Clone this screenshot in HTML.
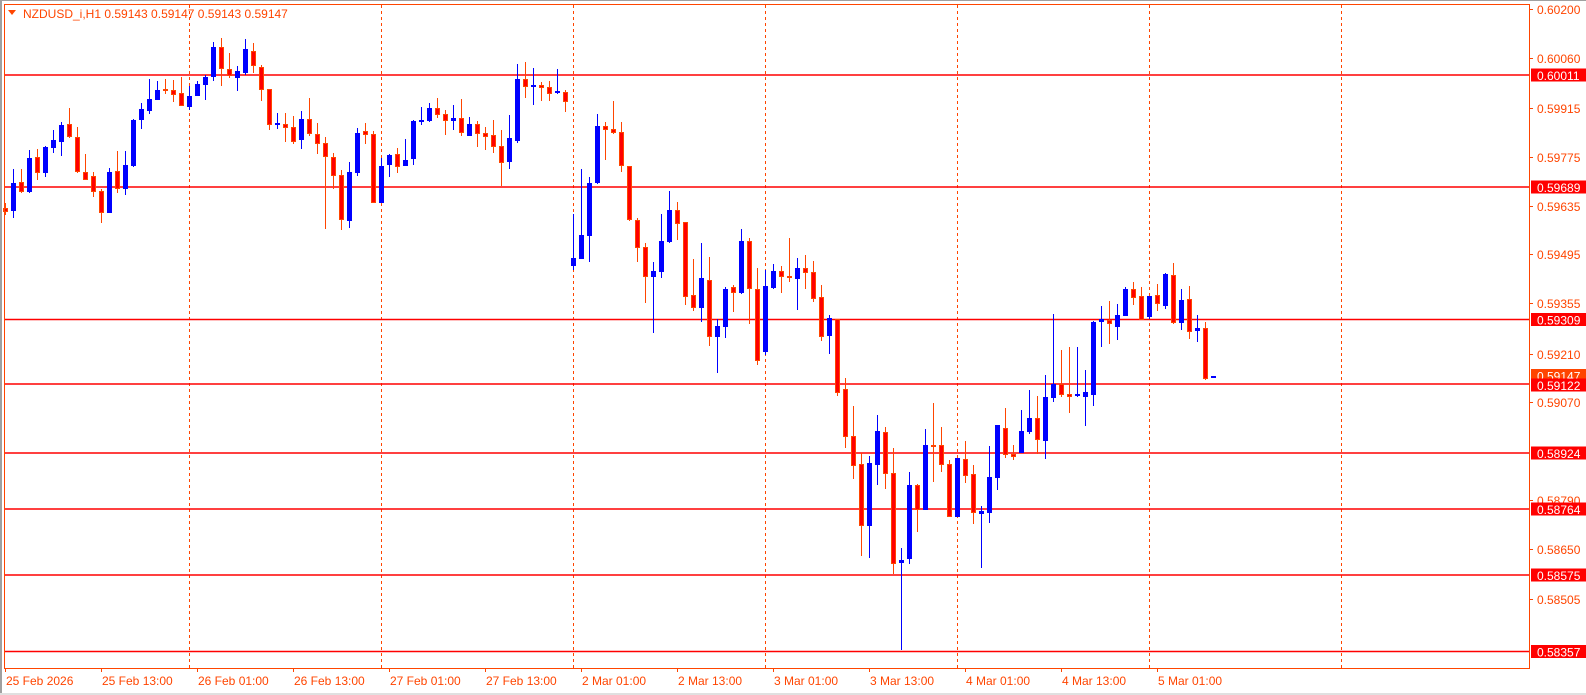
<!DOCTYPE html>
<html><head><meta charset="utf-8"><style>
html,body{margin:0;padding:0;background:#fff;width:1586px;height:695px;overflow:hidden}
svg{display:block}
text{font-family:"Liberation Sans",sans-serif;font-size:12px}
</style></head><body>
<svg id="s" width="1586" height="695" xmlns="http://www.w3.org/2000/svg">
<rect x="0" y="0" width="1586" height="695" fill="#fff"/>
<rect x="0" y="0" width="1586" height="1" fill="#a0a0a0"/>
<rect x="0" y="0" width="2" height="695" fill="#a0a0a0"/>
<rect x="0" y="693" width="1586" height="2" fill="#e0e0e0"/>
<g stroke="#ff4500" stroke-width="1" stroke-dasharray="3,3">
<line x1="189.5" y1="5" x2="189.5" y2="668"/>
<line x1="381.5" y1="5" x2="381.5" y2="668"/>
<line x1="573.5" y1="5" x2="573.5" y2="668"/>
<line x1="765.5" y1="5" x2="765.5" y2="668"/>
<line x1="957.5" y1="5" x2="957.5" y2="668"/>
<line x1="1149.5" y1="5" x2="1149.5" y2="668"/>
<line x1="1341.5" y1="5" x2="1341.5" y2="668"/>
</g>
<g stroke="#ff0000" stroke-width="1.5">
<line x1="4" y1="75" x2="1529" y2="75"/>
<line x1="4" y1="187" x2="1529" y2="187"/>
<line x1="4" y1="319.5" x2="1529" y2="319.5"/>
<line x1="4" y1="384" x2="1529" y2="384"/>
<line x1="4" y1="453" x2="1529" y2="453"/>
<line x1="4" y1="509" x2="1529" y2="509"/>
<line x1="4" y1="575" x2="1529" y2="575"/>
<line x1="4" y1="651.5" x2="1529" y2="651.5"/>
</g>
<g id="c"></g>
<rect x="4.5" y="4.5" width="1525" height="664" fill="none" stroke="#ff4500" stroke-width="1"/>
<polygon points="8,10 16,10 12,15" fill="#ff4500"/>
<text x="23" y="18" fill="#ff4500">NZDUSD_i,H1  0.59143 0.59147 0.59143 0.59147</text>
<g fill="#ff4500" id="ticks"></g>
<g fill="#ff4500">
<text x="1537" y="14">0.60200</text>
<text x="1537" y="63">0.60060</text>
<text x="1537" y="113">0.59915</text>
<text x="1537" y="162">0.59775</text>
<text x="1537" y="211">0.59635</text>
<text x="1537" y="259">0.59495</text>
<text x="1537" y="308">0.59355</text>
<text x="1537" y="359">0.59210</text>
<text x="1537" y="407">0.59070</text>
<text x="1537" y="505">0.58790</text>
<text x="1537" y="554">0.58650</text>
<text x="1537" y="604">0.58505</text>
</g>
<g>
<rect x="1531" y="68.5" width="55" height="13" fill="#ff0000"/><text x="1537" y="80" fill="#fff">0.60011</text>
<rect x="1531" y="180.5" width="55" height="13" fill="#ff0000"/><text x="1537" y="192" fill="#fff">0.59689</text>
<rect x="1531" y="313" width="55" height="13" fill="#ff0000"/><text x="1537" y="324.5" fill="#fff">0.59309</text>
<rect x="1531" y="369" width="55" height="13" fill="#ff4500"/><text x="1537" y="380.5" fill="#fff">0.59147</text>
<rect x="1531" y="378.5" width="55" height="13" fill="#ff0000"/><text x="1537" y="390" fill="#fff">0.59122</text>
<rect x="1531" y="446.5" width="55" height="13" fill="#ff0000"/><text x="1537" y="458" fill="#fff">0.58924</text>
<rect x="1531" y="502.5" width="55" height="13" fill="#ff0000"/><text x="1537" y="514" fill="#fff">0.58764</text>
<rect x="1531" y="568.5" width="55" height="13" fill="#ff0000"/><text x="1537" y="580" fill="#fff">0.58575</text>
<rect x="1531" y="645" width="55" height="13" fill="#ff0000"/><text x="1537" y="656.5" fill="#fff">0.58357</text>
</g>
<g fill="#ff4500">
<text x="6" y="685">25 Feb 2026</text>
<text x="102" y="685">25 Feb 13:00</text>
<text x="198" y="685">26 Feb 01:00</text>
<text x="294" y="685">26 Feb 13:00</text>
<text x="390" y="685">27 Feb 01:00</text>
<text x="486" y="685">27 Feb 13:00</text>
<text x="582" y="685">2 Mar 01:00</text>
<text x="678" y="685">2 Mar 13:00</text>
<text x="774" y="685">3 Mar 01:00</text>
<text x="870" y="685">3 Mar 13:00</text>
<text x="966" y="685">4 Mar 01:00</text>
<text x="1062" y="685">4 Mar 13:00</text>
<text x="1158" y="685">5 Mar 01:00</text>
</g>
</svg>
<script>
var D="r 203 208 212 215|b 169 183 211 218|r 169 182 192 193|b 150 158 192 193|r 149 157 173 180|b 146 147 173 177|b 130 140 148 153|b 122 125 142 156|r 108 124 137 138|r 127 137 172 173|r 154 172 180 180|r 172 176 192 197|r 189 191 213 223|b 168 172 213 213|r 151 171 189 193|b 151 165 189 195|b 119 120 166 167|b 103 109 120 129|b 79 99 111 114|b 81 90 100 100|r 79 89 91 94|r 80 90 95 102|r 77 93 106 106|b 86 96 107 110|b 81 84 96 96|b 75 77 85 100|b 42 47 77 81|r 38 47 69 86|r 53 69 76 78|b 66 71 78 91|b 39 49 73 75|r 43 51 66 73|r 65 67 90 101|r 89 89 125 130|b 113 123 125 129|r 113 124 128 142|r 116 127 142 144|b 111 119 140 149|r 98 119 134 136|r 123 134 144 154|r 137 143 157 229|r 153 157 176 189|r 170 175 220 230|b 162 172 221 228|b 128 133 173 176|r 123 131 135 144|r 131 134 203 203|b 158 166 203 203|b 154 155 165 177|r 148 154 167 173|b 139 160 166 166|b 120 121 159 165|b 107 120 121 125|b 103 108 121 122|r 98 108 115 118|r 110 114 121 135|b 105 118 121 130|r 99 118 133 136|b 117 124 136 136|r 121 124 134 147|r 127 133 137 150|r 120 135 147 153|r 130 146 163 186|b 115 138 162 169|b 64 79 141 143|r 62 79 87 98|b 68 85 87 105|r 82 85 88 101|r 81 87 94 101|b 69 91 93 94|r 90 92 102 112|b 214 258 266 270|b 169 235 259 259|b 177 183 236 262|b 114 126 183 184|r 122 126 130 160|r 101 129 133 134|r 122 132 166 172|r 166 166 220 221|r 218 220 248 262|r 243 247 277 303|b 262 271 277 333|b 214 241 272 278|b 191 210 242 243|r 202 210 224 240|r 222 222 297 305|r 259 295 308 311|b 243 278 308 322|r 257 280 337 346|b 319 326 337 373|b 287 289 327 338|r 285 287 293 312|b 229 241 293 294|r 238 241 289 324|r 268 289 361 365|b 270 286 352 355|b 264 271 288 289|r 266 271 277 293|r 238 276 278 282|b 258 268 279 310|r 255 268 273 289|r 261 272 299 302|r 285 297 337 341|b 315 318 336 354|r 319 319 393 396|r 378 389 437 448|r 406 436 466 479|r 453 464 526 556|b 456 463 526 558|b 415 431 465 485|r 427 432 474 489|r 448 473 564 574|b 548 560 563 650|b 472 485 559 564|r 484 485 510 532|b 429 445 510 510|r 403 445 447 482|r 427 445 465 472|r 460 464 517 517|b 458 458 517 517|r 441 459 476 483|r 465 474 513 524|b 506 511 514 568|b 446 477 513 523|b 425 425 478 490|r 408 428 455 458|r 445 454 457 460|b 410 431 453 453|b 390 418 432 434|r 396 418 440 454|b 375 397 441 459|b 314 384 398 402|r 350 384 395 397|r 347 394 397 413|b 347 394 396 397|b 370 392 397 426|b 321 322 395 406|b 306 319 322 347|r 301 320 324 344|b 304 315 327 340|b 287 289 316 316|r 282 289 298 305|r 287 296 320 320|b 296 296 317 319|r 284 295 304 311|b 273 274 306 309|r 263 275 323 324|b 289 300 323 330|r 286 299 332 339|b 315 328 331 342|r 322 328 379 380|b 376 376 378 378";
var g=document.getElementById('c'),ns="http://www.w3.org/2000/svg",h="";
D.split('|').forEach(function(s,i){var a=s.split(' '),t=a[0],H=+a[1],T=+a[2],B=+a[3],L=+a[4];
var x=Math.round(5.3+8*i);if(B-T<2)B=T+2;
var wc=t=='b'?'#0000ff':'#ff4500';
h+='<rect x="'+x+'" y="'+H+'" width="1" height="'+(L-H)+'" fill="'+wc+'"/>';
if(t=='b')h+='<rect x="'+(x-2)+'" y="'+T+'" width="5" height="'+(B-T)+'" fill="#0000ff"/>';
else h+='<rect x="'+(x-1.5)+'" y="'+(T+0.5)+'" width="4" height="'+(B-T-1)+'" fill="#ff0000" stroke="#ff4500" stroke-width="1"/>';});
g.innerHTML=h;
var tk=document.getElementById('ticks'),th="";
[9,58,108,157,206,254,303,354,402,500,549,599].forEach(function(y){th+='<rect x="1529" y="'+y+'" width="4" height="1"/>';});
for(var k=0;k<13;k++)th+='<rect x="'+(5+96*k)+'" y="668" width="1" height="4"/>';
tk.innerHTML=th;
</script>
</body></html>
